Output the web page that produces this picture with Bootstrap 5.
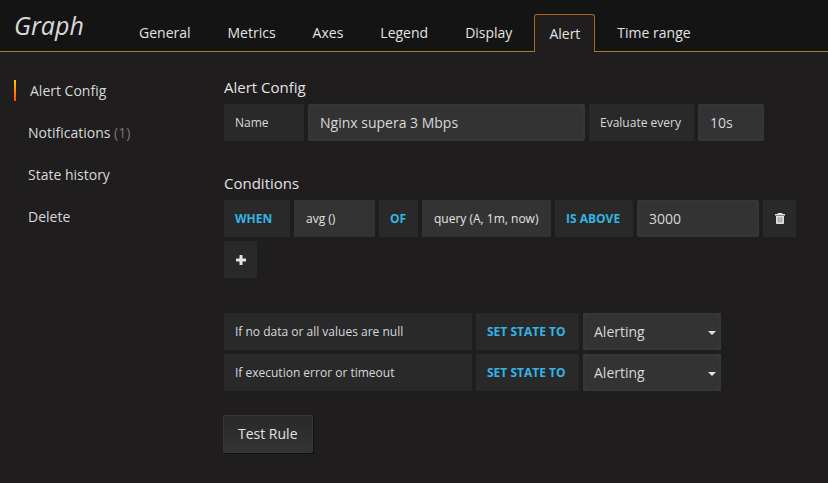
<!DOCTYPE html>
<html lang="en">
<head>
<meta charset="utf-8">
<meta name="viewport" content="width=device-width, initial-scale=1">
<title>Graph - Alert</title>
<link rel="stylesheet" href="https://cdn.jsdelivr.net/npm/bootstrap@5.3.0/dist/css/bootstrap.min.css">
<style>
  body { background: #1f1d1d; color: #d8d9da; font: 14px/20px "Open Sans", sans-serif; }
  a { color: inherit; text-decoration: none; }
  .editor-head { background: #141414; border-bottom: 1px solid #ae7f15; }
  .editor-title { width: 124px; padding: 9px 0 10px 14px; font-size: 25px; line-height: 32px; font-style: italic; }
  .editor-tabs { gap: 7px; }
  .editor-tabs .nav-link { color: #e3e3e3; padding: 8px 14px; border: 1px solid transparent; border-bottom: 0; border-radius: 3px 3px 0 0; }
  .editor-tabs .nav-link.active { background: #1f1d1d; color: #e3e3e3; border-color: #a8651c; padding: 9px 14px 8px; margin-bottom: -1px; }
  .side-menu { width: 223px; padding: 28px 0 0 14px; gap: 21px; }
  .side-menu a { line-height: 21px; padding-left: 14px; }
  .side-menu a.active { border-left: 2px solid; border-image: linear-gradient(#ffd500, #ff4400) 1; }
  .side-menu .text-count { color: #7b7570; }
  .alert-form { padding: 25px 16px 16px 0; }
  .alert-form section { padding-left: 1px; }
  .section-title { font-size: 15px; line-height: 20px; margin: 0 0 7px; font-weight: 400; color: #e3e3e3; }
  .field-rows, .field-row { gap: 4px; }
  .conditions { margin-top: 32px; }
  .state-rows { margin-top: 35px; }
  .cell { background: #292929; color: #d8d9da; height: 37px; padding: 0 11px; border: 0; border-radius: 1px; font-size: 12px; line-height: 37px; white-space: nowrap; text-align: left; }
  .cell-value { background: #333; color: #e3e3e3; padding: 0 12px; }
  .cell-key { color: #33b5e5; font-weight: 700; }
  .cell-input, .cell-input:focus { background: #333; color: #d8d9da; height: 37px; padding: 0 10px 0 11px; border: 1px solid #363636; border-radius: 2px; font-size: 14px; line-height: 34px; box-shadow: inset 0 0 4px #3b3b3b; }
  .select-box::after { content: ""; position: absolute; right: 5px; top: 18px; border: 4px solid transparent; border-top-color: #e3e3e3; border-bottom: 0; pointer-events: none; }
  .select-box .cell-input { background-image: none; border-radius: 0; padding-left: 10px; }
  .w-33 { width: 33px; } .w-39 { width: 39px; } .w-66 { width: 66px; } .w-78 { width: 78px; } .w-80 { width: 80px; } .w-81 { width: 81px; }
  .w-103 { width: 103px; } .w-105 { width: 105px; } .w-122 { width: 122px; } .w-129 { width: 129px; } .w-138 { width: 138px; }
  .w-248 { width: 248px; } .w-277 { width: 277px; }
  .btn-test, .btn-test:hover { color: #e3e3e3; font-size: 14px; line-height: 20px; padding: 8px 14px; background: linear-gradient(#292929, #333); border: 1px solid #363636; border-radius: 2px; box-shadow: 1px 1px 0 #111; }
</style>
</head>
<body>
<header class="editor-head d-flex align-items-end">
  <h1 class="editor-title mb-0 fw-normal flex-shrink-0">Graph</h1>
  <ul class="nav editor-tabs align-items-end">
    <li class="nav-item"><a class="nav-link" href="#general">General</a></li>
    <li class="nav-item"><a class="nav-link" href="#metrics">Metrics</a></li>
    <li class="nav-item"><a class="nav-link" href="#axes">Axes</a></li>
    <li class="nav-item"><a class="nav-link" href="#legend">Legend</a></li>
    <li class="nav-item"><a class="nav-link" href="#display">Display</a></li>
    <li class="nav-item"><a class="nav-link active" href="#alert" aria-current="page">Alert</a></li>
    <li class="nav-item"><a class="nav-link" href="#time">Time range</a></li>
  </ul>
</header>
<div class="d-flex">
  <nav class="side-menu d-flex flex-column flex-shrink-0" aria-label="Alert">
    <a class="active" href="#config">Alert Config</a>
    <a href="#notifications">Notifications <span class="text-count">(1)</span></a>
    <a href="#history">State history</a>
    <a href="#delete">Delete</a>
  </nav>
  <form class="alert-form flex-grow-1">
    <section>
      <h2 class="section-title">Alert Config</h2>
      <div class="field-row d-flex flex-wrap">
        <label class="cell w-80" for="name">Name</label>
        <input class="cell-input w-277" id="name" type="text" value="Nginx supera 3 Mbps">
        <label class="cell w-105" for="every">Evaluate every</label>
        <input class="cell-input w-66" id="every" type="text" value="10s">
      </div>
    </section>
    <section class="conditions">
      <h2 class="section-title">Conditions</h2>
      <div class="field-rows d-flex flex-column">
        <div class="field-row d-flex flex-wrap">
          <span class="cell cell-key w-66">WHEN</span>
          <button type="button" class="cell cell-value w-81">avg ()</button>
          <span class="cell cell-key w-39">OF</span>
          <button type="button" class="cell cell-value w-129">query (A, 1m, now)</button>
          <button type="button" class="cell cell-key w-78">IS ABOVE</button>
          <input class="cell-input w-122" type="text" value="3000" aria-label="Threshold">
          <button type="button" class="cell w-33 d-flex align-items-center justify-content-center p-0" aria-label="Remove condition">
            <svg width="10" height="11" viewBox="0 0 10 11" aria-hidden="true"><path fill="#e3e3e3" d="M3 0h4l.6 1H10v1.500H0V1h2.400z"/><path fill="#e3e3e3" d="M1 3h8v7q0 1-1 1H2q-1 0-1-1z"/><path stroke="#777" stroke-width=".8" d="M3.200 4.200v5.300M5 4.200v5.300M6.800 4.200v5.300"/></svg>
          </button>
        </div>
        <div class="field-row d-flex">
          <button type="button" class="cell w-33 d-flex align-items-center justify-content-center p-0" aria-label="Add condition">
            <svg width="10" height="10" viewBox="0 0 10 10" aria-hidden="true"><path fill="#e3e3e3" d="M3.500.5q0-.5.5-.5h2q.5 0 .5.500v3h3q.5 0 .5.500v2q0 .5-.5.500h-3v3q0 .5-.5.500H4q-.5 0-.5-.5v-3h-3Q0 6.500 0 6V4q0-.5.5-.5h3z"/></svg>
          </button>
        </div>
      </div>
    </section>
    <section class="state-rows field-rows d-flex flex-column">
      <div class="field-row d-flex flex-wrap">
        <label class="cell w-248" for="nodata">If no data or all values are null</label>
        <span class="cell cell-key w-103">SET STATE TO</span>
        <div class="select-box position-relative w-138">
          <select class="form-select cell-input" id="nodata"><option>Alerting</option><option>No Data</option><option>OK</option></select>
        </div>
      </div>
      <div class="field-row d-flex flex-wrap">
        <label class="cell w-248" for="error">If execution error or timeout</label>
        <span class="cell cell-key w-103">SET STATE TO</span>
        <div class="select-box position-relative w-138">
          <select class="form-select cell-input" id="error"><option>Alerting</option><option>Keep Last State</option></select>
        </div>
      </div>
    </section>
    <button type="button" class="btn btn-test mt-4">Test Rule</button>
  </form>
</div>
<script src="https://cdn.jsdelivr.net/npm/bootstrap@5.3.0/dist/js/bootstrap.bundle.min.js"></script>
</body>
</html>
